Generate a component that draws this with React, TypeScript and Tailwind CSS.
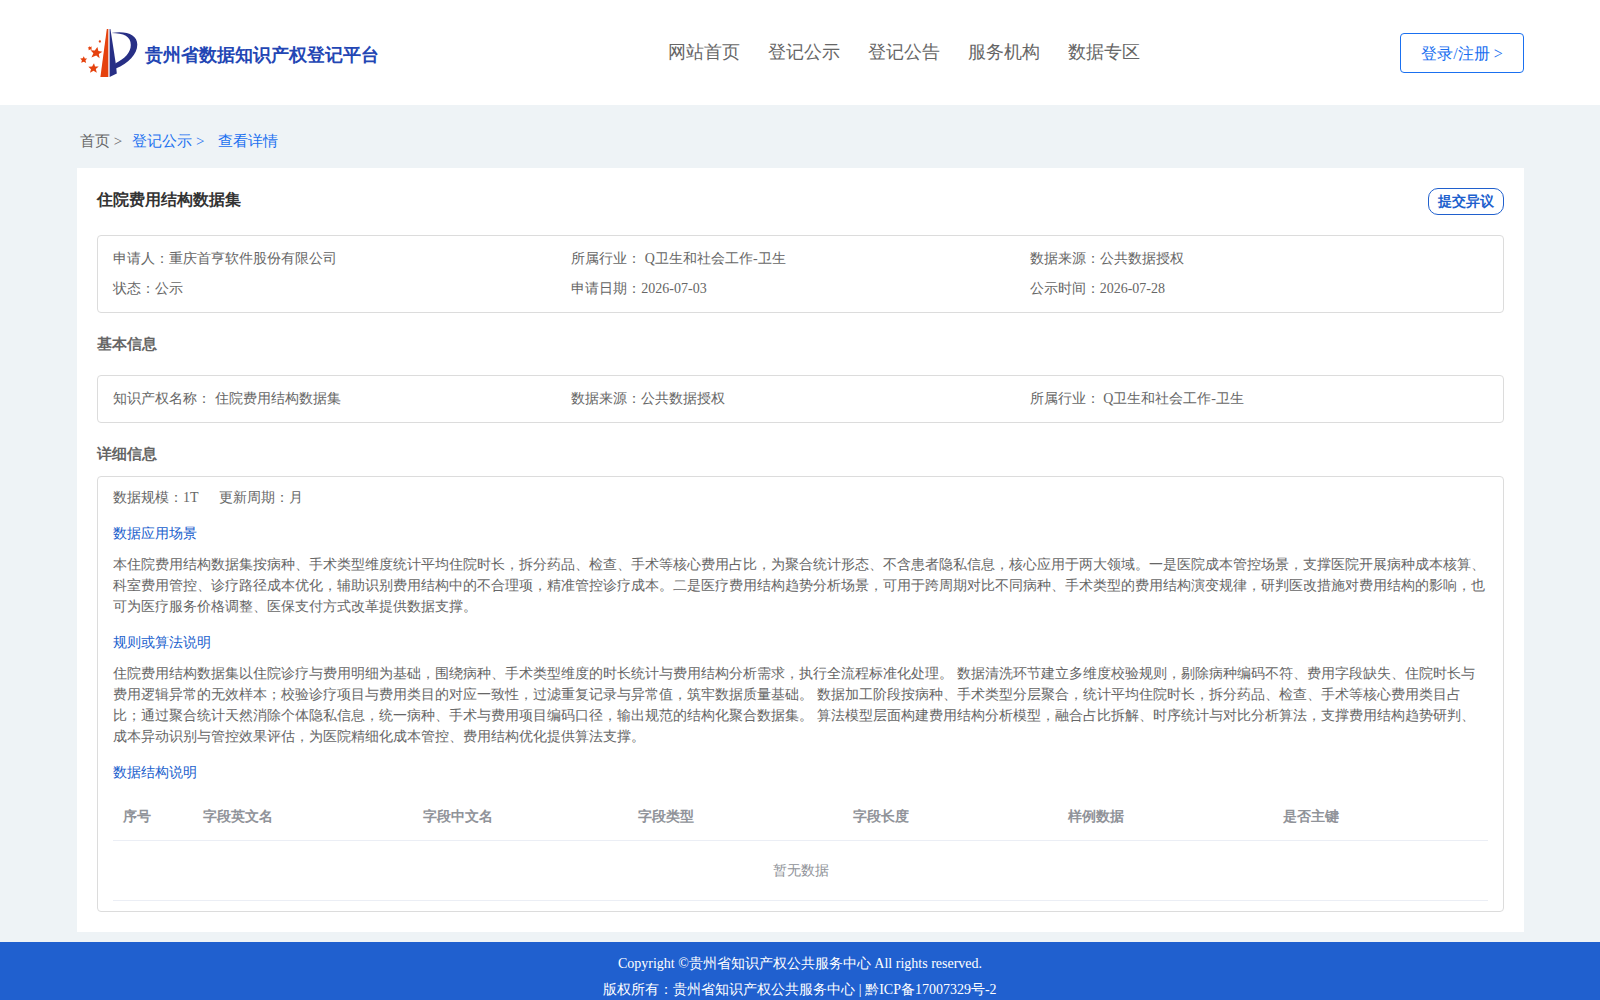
const navItems = ['网站首页', '登记公示', '登记公告', '服务机构', '数据专区'];

const summary = [
	'申请人：重庆首亨软件股份有限公司',
	'所属行业： Q卫生和社会工作-卫生',
	'数据来源：公共数据授权',
	'状态：公示',
	'申请日期：2026-07-03',
	'公示时间：2026-07-28',
];

const basicInfo = [
	'知识产权名称： 住院费用结构数据集',
	'数据来源：公共数据授权',
	'所属行业： Q卫生和社会工作-卫生',
];

const columns = [
	'字段英文名',
	'字段中文名',
	'字段类型',
	'字段长度',
	'样例数据',
	'是否主键',
];

function Logo() {
	return (
		<svg className="h-[52px] w-[60px]" viewBox="0 0 60 52" aria-hidden="true">
			<path d="M27.8 2h1.5v48H21.4z" fill="#e5420e" />
			<path d="M30.6 2h.8l5.600 36 .8 8.600L30.600 50z" fill="#272f85" />
			<path
				d="M32.200 6C48 3.500 58.300 8 58.300 17.500c0 9.800-9 19-21.500 24l-.6-5C46 31.500 51.800 25.500 51.800 18 51.800 9.500 45 6 32.200 6z"
				fill="#272f85"
			/>
			<g fill="#e5420e">
				<path d="M18.400 20l1 4 4 .7-3.600 2.200.8 4.400-3.400-2.700-4.800 1.900 2-4.200-2.900-3.100 4.300.3z" />
				<path d="M15 36.200l1 3.200 3.700.2-2.900 2.400 1 3.700-3.300-2-3.500 2.100 1-3.600-2.700-2.500 3.800-.3z" />
				<path d="M4.800 29.200l1 2.200 2.400.1-1.700 1.800.6 2.600-2.300-1.200-2.600 1.100.7-2.500-1.700-1.800 2.500-.2z" />
				<path d="M10 19.200l1.200.7 1.600-.3-.4 1.500.5 1.700-1.700-.3-1.500.8-.1-1.700-.9-1.200 1.400-.2z" />
				<path d="M20.300 12.800l.7.700 1-.1-.2 1 .4 1-1.100-.1-.9.500-.2-1.100-.6-.8.900-.2z" />
			</g>
		</svg>
	);
}

function InfoGrid({ items }: { items: string[] }) {
	return (
		<div className="grid grid-cols-3 rounded border border-[#dcdcdc] px-[15px] py-2 leading-[30px]">
			{items.map((item) => (
				<p key={item}>{item}</p>
			))}
		</div>
	);
}

export default function App() {
	return (
		<div className="min-h-screen bg-[#eef3f6] font-['Liberation_Serif',serif] text-sm text-[#666]">
			<header className="flex h-[105px] items-center justify-between bg-white pr-[76px] pl-[79px]">
				<a href="#" className="flex w-[328px] items-center gap-[6px]">
					<Logo />
					<span className="pt-1 text-lg font-bold whitespace-nowrap text-[#2346b4]">
						贵州省数据知识产权登记平台
					</span>
				</a>
				<nav className="flex gap-7 pb-[2px] text-lg">
					{navItems.map((item) => (
						<a key={item} href="#" className="hover:text-[#1a70f0]">
							{item}
						</a>
					))}
				</nav>
				<button
					type="button"
					className="h-10 w-[124px] rounded border border-[#1a70f0] pt-[2px] text-base text-[#1a70f0]"
				>
					登录/注册 &gt;
				</button>
			</header>

			<main className="pr-[76px] pb-[10px] pl-[77px]">
				{/* Breadcrumb */}
				<nav className="flex h-[63px] items-center pt-[10px] pl-[3px] text-[15px]">
					<a href="#" className="mr-[10px]">
						首页 &gt;
					</a>
					<a href="#" className="mr-[14px] text-[#1a70f0]">
						登记公示 &gt;
					</a>
					<a href="#" className="text-[#1a70f0]">
						查看详情
					</a>
				</nav>

				<div className="bg-white p-5">
					<div className="flex items-start justify-between pb-5">
						<h1 className="text-base font-bold text-[#333]">住院费用结构数据集</h1>
						<button
							type="button"
							className="h-[27px] w-[76px] rounded-[10px] border border-[#2060cd] font-bold text-[#2060cd]"
						>
							提交异议
						</button>
					</div>

					<InfoGrid items={summary} />

					<h2 className="py-5 text-[15px] leading-[22px] font-bold">基本信息</h2>
					<InfoGrid items={basicInfo} />

					<h2 className="pt-5 pb-[11px] text-[15px] leading-[22px] font-bold">详细信息</h2>
					<section className="rounded border border-[#dcdcdc] px-[15px] py-[10px] leading-[21px]">
						<div className="flex gap-5">
							<p>数据规模：1T</p>
							<p>更新周期：月</p>
						</div>

						<h3 className="pt-[15px] pb-[10px] text-[#2060cd]">数据应用场景</h3>
						<p>
							本住院费用结构数据集按病种、手术类型维度统计平均住院时长，拆分药品、检查、手术等核心费用占比，为聚合统计形态、不含患者隐私信息，核心应用于两大领域。一是医院成本管控场景，支撑医院开展病种成本核算、科室费用管控、诊疗路径成本优化，辅助识别费用结构中的不合理项，精准管控诊疗成本。二是医疗费用结构趋势分析场景，可用于跨周期对比不同病种、手术类型的费用结构演变规律，研判医改措施对费用结构的影响，也可为医疗服务价格调整、医保支付方式改革提供数据支撑。
						</p>

						<h3 className="pt-[15px] pb-[10px] text-[#2060cd]">规则或算法说明</h3>
						<p>
							住院费用结构数据集以住院诊疗与费用明细为基础，围绕病种、手术类型维度的时长统计与费用结构分析需求，执行全流程标准化处理。 数据清洗环节建立多维度校验规则，剔除病种编码不符、费用字段缺失、住院时长与费用逻辑异常的无效样本；校验诊疗项目与费用类目的对应一致性，过滤重复记录与异常值，筑牢数据质量基础。 数据加工阶段按病种、手术类型分层聚合，统计平均住院时长，拆分药品、检查、手术等核心费用类目占比；通过聚合统计天然消除个体隐私信息，统一病种、手术与费用项目编码口径，输出规范的结构化聚合数据集。 算法模型层面构建费用结构分析模型，融合占比拆解、时序统计与对比分析算法，支撑费用结构趋势研判、成本异动识别与管控效果评估，为医院精细化成本管控、费用结构优化提供算法支撑。
						</p>

						<h3 className="pt-[15px] pb-[10px] text-[#2060cd]">数据结构说明</h3>
						<table className="w-full table-fixed text-left text-[#909399]">
							<thead>
								<tr className="h-[47px] border-b border-[#ebeef5]">
									<th className="w-20 px-[10px]">序号</th>
									{columns.map((column, index) => (
										<th
											key={column}
											className={index === 0 ? 'w-[220px] px-[10px]' : 'px-[10px]'}
										>
											{column}
										</th>
									))}
								</tr>
							</thead>
							<tbody>
								<tr className="h-[60px] border-b border-[#ebeef5]">
									<td colSpan={7} className="text-center">
										暂无数据
									</td>
								</tr>
							</tbody>
						</table>
					</section>
				</div>
			</main>

			<footer className="bg-[#2060cf] pt-[9px] pb-2 text-center leading-[26px] text-white">
				<p>Copyright ©贵州省知识产权公共服务中心 All rights reserved.</p>
				<p>版权所有：贵州省知识产权公共服务中心 | 黔ICP备17007329号-2</p>
			</footer>
		</div>
	);
}
